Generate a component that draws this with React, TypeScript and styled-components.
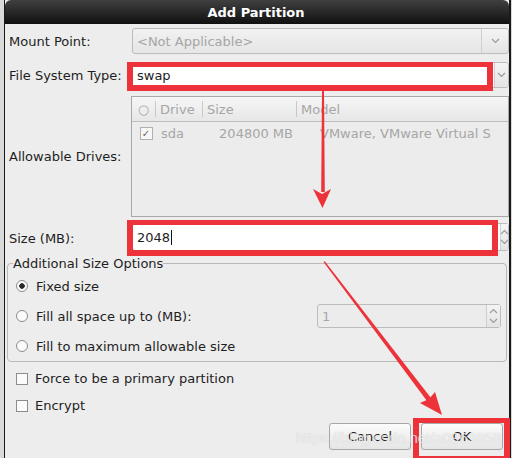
import styled, { createGlobalStyle } from "styled-components";

const GlobalStyle = createGlobalStyle`
  html, body {
    margin: 0;
    padding: 0;
    background: #d9d9d9;
  }
  body {
    font-family: "DejaVu Sans", "Liberation Sans", sans-serif;
    font-size: 13px;
    color: #1e1e1e;
  }
`;

const RED = "#ee3239";
const DIM = "#a6a6a6";

const Chevron = ({ up }: { up?: boolean }) => (
  <svg width="9" height="6" viewBox="0 0 9 6">
    <path
      d={up ? "M1 5 L4.5 1.5 L8 5" : "M1 1 L4.5 4.5 L8 1"}
      fill="none"
      stroke="#9a9a9a"
      strokeWidth="1.2"
    />
  </svg>
);

const App = () => {
  return (
    <>
      <GlobalStyle />
      <Page>
        <Window>
          <TitleBar>Add Partition</TitleBar>
          <Body>
            <FormGrid>
              <Label>Mount Point:</Label>
              <Combo $disabled>
                <ComboText $dim>&lt;Not Applicable&gt;</ComboText>
                <ComboButton>
                  <Chevron />
                </ComboButton>
              </Combo>

              <Label>File System Type:</Label>
              <Combo>
                <ComboText>swap</ComboText>
                <ComboButton $narrow>
                  <Chevron />
                </ComboButton>
              </Combo>

              <Label>Allowable Drives:</Label>
              <DriveTable>
                <HeaderRow>
                  <HeadCell $center>○</HeadCell>
                  <HeadCell $sep>Drive</HeadCell>
                  <HeadCell $sep>Size</HeadCell>
                  <HeadCell $sep>Model</HeadCell>
                </HeaderRow>
                <DataRow>
                  <Cell $center>
                    <TickBox>✓</TickBox>
                  </Cell>
                  <Cell $pad={6}>sda</Cell>
                  <Cell $right>204800 MB</Cell>
                  <Cell $pad={24}>VMware, VMware Virtual S</Cell>
                </DataRow>
              </DriveTable>

              <Label>Size (MB):</Label>
              <Spin $offset>
                <ComboText>
                  2048<Caret />
                </ComboText>
                <SpinButtons $tiny>
                  <Chevron up />
                  <Chevron />
                </SpinButtons>
              </Spin>
            </FormGrid>

            <Frame>
              <Legend>Additional Size Options</Legend>
              <OptionRow>
                <Radio $checked />
                <span>Fixed size</span>
              </OptionRow>
              <OptionRow>
                <Radio />
                <span>Fill all space up to (MB):</span>
                <SmallSpin>
                  <ComboText $dim>1</ComboText>
                  <SpinButtons>
                    <Chevron up />
                    <Chevron />
                  </SpinButtons>
                </SmallSpin>
              </OptionRow>
              <OptionRow>
                <Radio />
                <span>Fill to maximum allowable size</span>
              </OptionRow>
            </Frame>

            <CheckRow $first>
              <Box />
              <span>Force to be a primary partition</span>
            </CheckRow>
            <CheckRow>
              <Box />
              <span>Encrypt</span>
            </CheckRow>

            <ButtonBar>
              <Button>Cancel</Button>
              <Button>OK</Button>
            </ButtonBar>
          </Body>
        </Window>

        <Mark $x={127} $y={62} $w={366} $h={29} />
        <Mark $x={127} $y={220} $w={371} $h={36} />
        <Mark $x={413} $y={418} $w={97} $h={44} />

        <Arrows width="512" height="458" viewBox="0 0 512 458">
          <polygon points="322,91 324,91 324.8,192 321.2,192" fill={RED} />
          <polygon points="313,189 322,194 331,189 322.5,208" fill={RED} />
          <polygon points="323.5,262 324.8,261.2 431,398 427,401" fill={RED} />
          <polygon points="420,403 429,399 435,392 442,415" fill={RED} />
        </Arrows>

        <Watermark>https://blog.csdn.net/a0963858</Watermark>
      </Page>
    </>
  );
};

export default App;

const Page = styled.div`
  position: relative;
  width: 512px;
  height: 458px;
  overflow: hidden;
  background: #d9d9d9;
`;

const Window = styled.div`
  margin-left: 4px;
  width: 504px;
  height: 458px;
  border-left: 1px solid #1a1a1a;
  border-right: 2px solid #1a1a1a;
  background: #ededed;
  display: flex;
  flex-direction: column;
`;

const TitleBar = styled.div`
  height: 24px;
  flex: none;
  border-radius: 6px 6px 0 0;
  background: linear-gradient(#404040, #101010);
  color: #ffffff;
  font-weight: bold;
  font-size: 13px;
  display: flex;
  align-items: center;
  justify-content: center;
  padding-right: 2px;
`;

const Body = styled.div`
  padding: 4px 0 0 3px;
  display: flex;
  flex-direction: column;
`;

const FormGrid = styled.div`
  display: grid;
  grid-template-columns: 123px 1fr;
  row-gap: 8px;
  padding-left: 1px;
  align-items: center;
`;

const Label = styled.div`
  white-space: nowrap;
`;

const Combo = styled.div<{ $disabled?: boolean }>`
  height: 26px;
  box-sizing: border-box;
  border: 1px solid #bcbcbc;
  border-radius: 3px;
  background: ${(p) => (p.$disabled ? "linear-gradient(#f1f1f1, #e6e6e6)" : "#ffffff")};
  display: flex;
  align-items: stretch;
`;

const Spin = styled(Combo)<{ $offset?: boolean }>`
  height: 28px;
  margin-top: ${(p) => (p.$offset ? "-2px" : "0")};
`;

const ComboText = styled.div<{ $dim?: boolean }>`
  flex: 1;
  display: flex;
  align-items: center;
  padding-left: 4px;
  color: ${(p) => (p.$dim ? DIM : "#1e1e1e")};
  white-space: nowrap;
  overflow: hidden;
`;

const Caret = styled.span`
  display: inline-block;
  width: 1px;
  height: 15px;
  margin-left: 1px;
  background: #111;
`;

const ComboButton = styled.div<{ $narrow?: boolean }>`
  width: ${(p) => (p.$narrow ? "13px" : "26px")};
  border-left: 1px solid #cfcfcf;
  background: linear-gradient(#f4f4f4, #e4e4e4);
  border-radius: 0 3px 3px 0;
  display: flex;
  align-items: center;
  justify-content: center;
`;

const SpinButtons = styled.div<{ $tiny?: boolean }>`
  width: ${(p) => (p.$tiny ? "7px" : "13px")};
  border-left: 1px solid #cfcfcf;
  background: linear-gradient(#f4f4f4, #e4e4e4);
  display: flex;
  flex-direction: column;
  align-items: center;
  justify-content: space-evenly;
  overflow: hidden;
`;

const DriveTable = styled.div`
  height: 121px;
  box-sizing: border-box;
  border: 1px solid #a9a9a9;
  background: #ececec;
  overflow: hidden;
  margin-left: -1px;
  color: ${DIM};
`;

const HeaderRow = styled.div`
  display: grid;
  grid-template-columns: 23px 47px 94px 1fr;
  height: 24px;
  border-bottom: 1px solid #bdbdbd;
  background: linear-gradient(#f6f6f6, #e7e7e7);
`;

const HeadCell = styled.div<{ $sep?: boolean; $center?: boolean }>`
  display: flex;
  align-items: center;
  justify-content: ${(p) => (p.$center ? "center" : "flex-start")};
  padding-left: ${(p) => (p.$center ? "0" : "4px")};
  border-left: ${(p) => (p.$sep ? "1px solid #c8c8c8" : "none")};
  margin: ${(p) => (p.$sep ? "4px 0" : "0")};
  white-space: nowrap;
`;

const DataRow = styled.div`
  display: grid;
  grid-template-columns: 23px 47px 94px 1fr;
  height: 22px;
`;

const Cell = styled.div<{ $center?: boolean; $right?: boolean; $pad?: number }>`
  display: flex;
  align-items: center;
  justify-content: ${(p) => (p.$center ? "center" : p.$right ? "flex-end" : "flex-start")};
  padding-left: ${(p) => (p.$pad ? `${p.$pad}px` : "0")};
  padding-right: ${(p) => (p.$right ? "3px" : "0")};
  white-space: nowrap;
  overflow: hidden;
`;

const TickBox = styled.div`
  width: 11px;
  height: 11px;
  border: 1px solid #b0b0b0;
  background: #f7f7f7;
  font-size: 10px;
  font-weight: bold;
  line-height: 11px;
  text-align: center;
  color: #666;
  margin-left: 5px;
`;

const Frame = styled.fieldset`
  margin: 5px 2px 0 -1px;
  padding: 0 5px 0 5px;
  border: 1px solid #b9b9b9;
  border-radius: 4px;
  min-width: 0;
`;

const Legend = styled.legend`
  padding: 0;
  line-height: 15px;
`;

const OptionRow = styled.div`
  height: 30px;
  display: flex;
  align-items: center;
  gap: 8px;
  padding-left: 3px;
`;

const Radio = styled.div<{ $checked?: boolean }>`
  width: 10px;
  height: 10px;
  border-radius: 50%;
  border: 1px solid #8c8c8c;
  background: ${(p) =>
    p.$checked
      ? "radial-gradient(circle, #2a2a2a 0 2.5px, #fbfbfb 3px)"
      : "#fbfbfb"};
`;

const SmallSpin = styled(Combo)`
  height: 24px;
  width: 184px;
  margin-left: auto;
  margin-right: 0;
  background: #ececec;
  border-color: #bcbcbc;
`;

const CheckRow = styled.div<{ $first?: boolean }>`
  height: 27px;
  display: flex;
  align-items: center;
  gap: 7px;
  padding-left: 8px;
  margin-top: ${(p) => (p.$first ? "3px" : "0")};
`;

const Box = styled.div`
  width: 10px;
  height: 10px;
  border: 1px solid #8c8c8c;
  background: #fbfbfb;
`;

const ButtonBar = styled.div`
  display: flex;
  justify-content: flex-end;
  gap: 10px;
  padding-right: 6px;
  margin-top: 4px;
`;

const Button = styled.button`
  width: 82px;
  height: 27px;
  font-family: "DejaVu Sans", "Liberation Sans", sans-serif;
  font-size: 13px;
  color: #1e1e1e;
  border: 1px solid #a8a8a8;
  border-radius: 3px;
  background: linear-gradient(#fbfbfb, #e6e6e6);
  padding: 0;
`;

const Mark = styled.div<{ $x: number; $y: number; $w: number; $h: number }>`
  position: absolute;
  left: ${(p) => p.$x}px;
  top: ${(p) => p.$y}px;
  width: ${(p) => p.$w}px;
  height: ${(p) => p.$h}px;
  box-sizing: border-box;
  border: 6px solid ${RED};
  border-width: 5px 6px 6px 6px;
`;

const Arrows = styled.svg`
  position: absolute;
  left: 0;
  top: 0;
  pointer-events: none;
`;

const Watermark = styled.div`
  position: absolute;
  left: 296px;
  top: 429px;
  font-family: "Liberation Sans", sans-serif;
  font-size: 15px;
  color: rgba(255, 255, 255, 0.7);
  text-shadow: 0 0 1px rgba(150, 150, 150, 0.5);
  white-space: nowrap;
  pointer-events: none;
`;
